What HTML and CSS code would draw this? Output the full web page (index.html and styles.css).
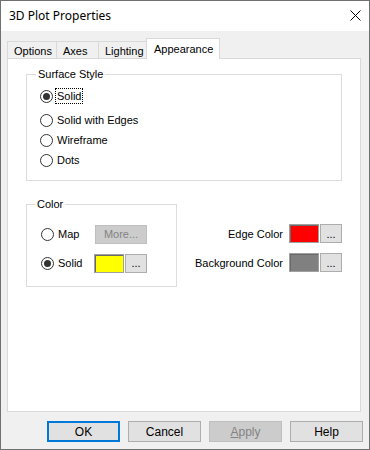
FILE: index.html
```html
<!DOCTYPE html>
<html lang="en">
<head>
  <meta charset="UTF-8" />
  <title>3D Plot Properties</title>
  <link rel="stylesheet" href="styles.css">
</head>
<body>

  <div class="dialog">
    <div class="titlebar">
      <span class="title">3D Plot Properties</span>
      <svg class="close" width="11" height="11" viewBox="0 0 11 11">
        <path d="M0.5 0.5 L10.5 10.5 M10.5 0.5 L0.5 10.5" stroke="#000" stroke-width="1" fill="none"/>
      </svg>
    </div>

    <div class="tabs">
      <div class="tab tab-options">Options</div>
      <div class="tab tab-axes">Axes</div>
      <div class="tab tab-lighting">Lighting</div>
      <div class="tab active">Appearance</div>
    </div>

    <div class="panel">
      <fieldset class="group surface">
        <legend>Surface Style</legend>
        <div class="options">
          <div class="option"><span class="radio checked"></span><span class="label focus">Solid</span></div>
          <div class="option"><span class="radio"></span><span class="label">Solid with Edges</span></div>
          <div class="option"><span class="radio"></span><span class="label">Wireframe</span></div>
          <div class="option"><span class="radio"></span><span class="label">Dots</span></div>
        </div>
      </fieldset>

      <div class="lower">
        <fieldset class="group color">
          <legend>Color</legend>
          <div class="color-rows">
            <div class="color-row">
              <div class="option"><span class="radio"></span><span class="label">Map</span></div>
              <button class="btn small disabled">More...</button>
            </div>
            <div class="color-row">
              <div class="option"><span class="radio checked"></span><span class="label">Solid</span></div>
              <div class="picker">
                <span class="swatch yellow"></span>
                <button class="btn dots">...</button>
              </div>
            </div>
          </div>
        </fieldset>

        <div class="extra">
          <div class="picker-row">
            <span class="picker-label">Edge Color</span>
            <div class="picker">
              <span class="swatch red"></span>
              <button class="btn dots">...</button>
            </div>
          </div>
          <div class="picker-row">
            <span class="picker-label">Background Color</span>
            <div class="picker">
              <span class="swatch gray"></span>
              <button class="btn dots">...</button>
            </div>
          </div>
        </div>
      </div>
    </div>

    <div class="footer">
      <button class="btn main default">OK</button>
      <button class="btn main">Cancel</button>
      <button class="btn main disabled"><u>A</u>pply</button>
      <button class="btn main">Help</button>
    </div>
  </div>

</body>
</html>
```

FILE: styles.css
```css
body {
  margin: 0;
  font-family: 'Liberation Sans', Arial, sans-serif;
  font-size: 11px;
  color: #000;
  background: #f0f0f0;
}

.dialog {
  width: 370px;
  height: 450px;
  box-sizing: border-box;
  border: 1px solid #707070;
  background: #f0f0f0;
  display: flex;
  flex-direction: column;
}

.titlebar {
  height: 30px;
  flex: none;
  background: #fff;
  display: flex;
  align-items: center;
  justify-content: space-between;
  padding: 0 8px 0 8px;
}

.title {
  font-family: 'Segoe UI', 'Noto Sans', 'Open Sans', sans-serif;
  font-size: 12px;
  margin-top: -1px;
}

.close {
  margin-top: -2px;
}

.tabs {
  height: 20px;
  flex: none;
  margin-top: 7px;
  padding-left: 6px;
  display: flex;
  align-items: flex-end;
}

.tab {
  height: 17px;
  box-sizing: border-box;
  border: 1px solid #d9d9d9;
  border-bottom: none;
  margin-left: -1px;
  padding: 2px 6px 0 6px;
  background: #f0f0f0;
  line-height: 14px;
}

.tab:first-child {
  margin-left: 0;
}

.tab-options { width: 50px; }
.tab-axes { width: 43px; }
.tab-lighting { width: 49px; }

.tab.active {
  width: 74px;
  height: 21px;
  margin-bottom: -1px;
  padding: 3px 7px 0 7px;
  background: #fff;
  position: relative;
  z-index: 1;
}

.panel {
  height: 354px;
  flex: none;
  box-sizing: border-box;
  margin: 0 8px 0 6px;
  border: 1px solid #d9d9d9;
  background: #fff;
}

.group {
  margin: 0;
  padding: 0;
  border: 1px solid #dcdcdc;
  min-width: 0;
}

.group legend {
  margin-left: 9px;
  padding: 0 2px;
  line-height: 13px;
}

.surface {
  margin: 9px 18px 0 18px;
  padding: 5px 0 10px 0;
}

.options {
  display: flex;
  flex-direction: column;
  padding-left: 13px;
}

.option {
  height: 20px;
  display: flex;
  align-items: center;
  gap: 4px;
}

.options .option:first-child {
  margin-bottom: 4px;
}

.radio {
  width: 13px;
  height: 13px;
  box-sizing: border-box;
  border: 1px solid #333;
  border-radius: 50%;
  background: #fff;
  display: inline-flex;
  align-items: center;
  justify-content: center;
}

.radio.checked::after {
  content: '';
  width: 7px;
  height: 7px;
  border-radius: 50%;
  background: #333;
}

.label.focus {
  outline: 1px dotted #000;
  outline-offset: 0;
  padding: 0 1px;
  margin-left: -1px;
  line-height: 14px;
}

.lower {
  display: flex;
  align-items: flex-start;
  margin: 17px 18px 0 18px;
}

.color {
  width: 151px;
  box-sizing: border-box;
  padding: 13px 0 14px 0;
}

.color legend {
  margin-left: 8px;
}

.color-rows {
  display: flex;
  flex-direction: column;
  gap: 10px;
  padding-left: 14px;
}

.color-row {
  height: 19px;
  display: grid;
  grid-template-columns: 53px auto;
  align-items: center;
}

.picker {
  display: flex;
  gap: 1px;
  height: 19px;
}

.swatch {
  width: 30px;
  height: 19px;
  box-sizing: border-box;
  border: 1px solid #a0a0a0;
  box-shadow: inset 1px 1px #6a6a6a;
}

.swatch.yellow { background: #ffff00; }
.swatch.red { background: #ff0000; }
.swatch.gray { background: #808080; }

.btn {
  font-family: 'Liberation Sans', Arial, sans-serif;
  font-size: 11px;
  color: #000;
  background: #e1e1e1;
  border: 1px solid #adadad;
  padding: 0;
  margin: 0;
  box-sizing: border-box;
}

.btn.dots {
  width: 22px;
  height: 19px;
  line-height: 12px;
}

.btn.small {
  width: 52px;
  height: 19px;
  margin-left: 1px;
}

.btn.disabled {
  background: #cccccc;
  border-color: #bfbfbf;
  color: #838383;
}

.extra {
  flex: 1;
  display: flex;
  flex-direction: column;
  align-items: flex-end;
  gap: 10px;
  padding-top: 26px;
}

.picker-row {
  display: flex;
  align-items: center;
  gap: 6px;
}

.footer {
  flex: none;
  display: flex;
  justify-content: flex-end;
  gap: 8px;
  margin-top: 9px;
  padding-right: 6px;
}

.btn.main {
  width: 73px;
  height: 21px;
  font-size: 12px;
}

.btn.default {
  border: 2px solid #0078d7;
}
```
